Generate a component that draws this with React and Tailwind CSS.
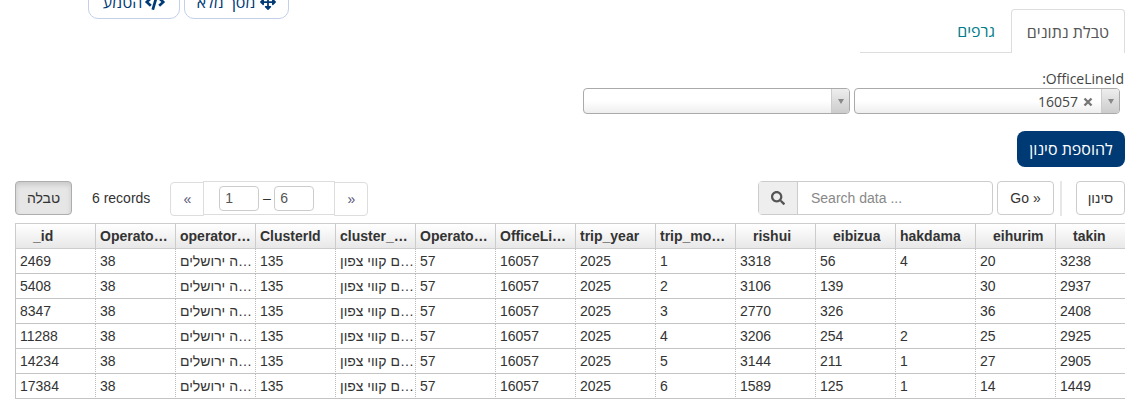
import React from 'react';
import { FaSearch, FaCode, FaArrowsAlt } from 'react-icons/fa';

const columns = [
  { label: '_id', pad: true },
  { label: 'Operato…' },
  { label: 'operator…' },
  { label: 'ClusterId' },
  { label: 'cluster_…' },
  { label: 'Operato…' },
  { label: 'OfficeLi…' },
  { label: 'trip_year' },
  { label: 'trip_mo…' },
  { label: 'rishui', pad: true },
  { label: 'eibizua', pad: true },
  { label: 'hakdama' },
  { label: 'eihurim', pad: true },
  { label: 'takin', pad: true },
];

const rows = [
  ['2469', '1', '3318', '56', '4', '20', '3238'],
  ['5408', '2', '3106', '139', '', '30', '2937'],
  ['8347', '3', '2770', '326', '', '36', '2408'],
  ['11288', '4', '3206', '254', '2', '25', '2925'],
  ['14234', '5', '3144', '211', '1', '27', '2905'],
  ['17384', '6', '1589', '125', '1', '14', '1449'],
];

function Cell({ children, first }) {
  return (
    <td
      className={`h-[25px] overflow-hidden whitespace-nowrap border-b border-l border-b-[#c4c4c4] p-0 pl-[4px] ${
        first ? 'border-l-[#c4c4c4]' : 'border-l-[#bbb] [border-left-style:dotted]'
      }`}
    >
      {children}
    </td>
  );
}

function SelectBox({ value, width }) {
  return (
    <div className={`flex h-[26px] overflow-hidden rounded-[4px] border border-[#aaa] bg-gradient-to-b from-white via-white to-[#eee] font-['Open_Sans',sans-serif] ${width}`}>
      <div className="flex flex-1 items-center justify-end pr-[8px] text-[14px] text-[#444]">
        {value && (
          <>
            <span>{value}</span>
            <svg width="10" height="10" viewBox="0 0 10 10" className="ml-[5px] mt-[2px]">
              <path d="M1.5 1.5l7 7M8.5 1.5l-7 7" stroke="#777" strokeWidth="2.4" />
            </svg>
          </>
        )}
      </div>
      <div className="flex w-[18px] items-center justify-center border-l border-[#ccc] bg-gradient-to-b from-[#eee] to-[#ccc]">
        <div className="mt-[1px] h-0 w-0 border-x-[3.5px] border-t-[5px] border-x-transparent border-t-[#888]" />
      </div>
    </div>
  );
}

export default function App() {
  return (
    <div className="h-[410px] w-[1137px] overflow-hidden bg-white font-['Liberation_Sans',sans-serif] text-[14px] text-[#333]">
      {/* Top buttons, cut off by the top of the window */}
      <div className="-mt-[16px] flex h-[35px] gap-[4px] pl-[88px]">
        <button className="flex h-[35px] w-[92px] items-center justify-center gap-[3px] rounded-[10px] border border-[#c3d0e8] font-['Open_Sans',sans-serif] text-[16px] text-[#003a75]">
          <span>הטמע</span>
          <FaCode size={20} className="text-[#003a75]" />
        </button>
        <button className="flex h-[35px] w-[105px] items-center justify-center gap-[5px] rounded-[10px] border border-[#c3d0e8] font-['Open_Sans',sans-serif] text-[16px] text-[#003a75]">
          <span>מסך מלא</span>
          <FaArrowsAlt size={16} className="text-[#003a75]" />
        </button>
      </div>

      {/* Tabs */}
      <div className="mr-[12px] mt-[-10px] flex h-[44px] justify-end pl-[860px]">
        <div className="flex h-[44px] flex-1 items-center justify-end border-b border-[#ddd] pr-[16px] font-['Open_Sans',sans-serif] text-[16px] text-[#007b8a]">
          גרפים
        </div>
        <div className="flex h-[44px] w-[114px] items-center justify-center rounded-t-[4px] border border-b-0 border-[#ddd] font-['Open_Sans',sans-serif] text-[16px] text-[#555]">
          טבלת נתונים
        </div>
      </div>

      {/* Filters */}
      <div className="mr-[13px] mt-[17px] text-right font-['Open_Sans',sans-serif] text-[14px] leading-[18px] text-[#444]" dir="rtl">
        OfficeLineId:
      </div>
      <div className="mr-[17px] flex justify-end gap-[4px]">
        <SelectBox width="w-[267px]" />
        <SelectBox width="w-[266px]" value="16057" />
      </div>
      <div className="mr-[12px] mt-[17px] flex justify-end">
        <button className="h-[36px] w-[108px] rounded-[8px] bg-[#003a75] font-['Open_Sans',sans-serif] text-[16px] text-white">
          להוספת סינון
        </button>
      </div>

      {/* Toolbar */}
      <div className="ml-[15px] mr-[12px] mt-[14px] flex h-[35px] items-start justify-between">
        <div className="flex items-start">
          <button className="h-[34px] w-[57px] rounded-[4px] border border-[#adadad] bg-[#e6e6e6] text-[#333] shadow-[inset_0_3px_5px_rgba(0,0,0,0.125)]">
            טבלה
          </button>
          <span className="ml-[20px] mt-[8px] leading-[18px]">6 records</span>
          <div className="ml-[20px] flex h-[35px]">
            <div className="mt-[1px] flex h-[34px] w-[34px] items-center justify-center rounded-l-[4px] border border-[#ddd] text-[#557]">«</div>
            <div className="-ml-px flex h-[34px] w-[132px] items-center gap-[3px] border border-[#ddd] pl-[15px]">
              <span className="flex h-[25px] w-[40px] items-center rounded-[4px] border border-[#ccc] pl-[5px] text-[#555]">1</span>
              <span className="w-[9px] text-center">–</span>
              <span className="flex h-[25px] w-[40px] items-center rounded-[4px] border border-[#ccc] pl-[5px] text-[#555]">6</span>
            </div>
            <div className="-ml-px mt-[1px] flex h-[34px] w-[34px] items-center justify-center rounded-r-[4px] border border-[#ddd] text-[#557]">»</div>
          </div>
        </div>
        <div className="flex items-start">
          <div className="flex h-[34px] w-[235px] rounded-[4px] border border-[#ccc]">
            <div className="flex w-[39px] items-center justify-center border-r border-[#ccc] bg-[#eee]">
              <FaSearch size={14} className="text-[#555]" />
            </div>
            <span className="flex flex-1 items-center pl-[13px] text-[#888]">Search data ...</span>
          </div>
          <button className="ml-[4px] h-[34px] w-[57px] rounded-[4px] border border-[#ccc]">Go »</button>
          <div className="ml-[6px] h-[35px] w-[2px] bg-[#e7e7e7]" />
          <button className="ml-[14px] h-[34px] w-[49px] rounded-[4px] border border-[#ccc]">סינון</button>
        </div>
      </div>

      {/* Data table */}
      <div className="ml-[15px] mr-[12px] mt-[7px] overflow-hidden">
        <table className="w-[1120px] table-fixed border-separate border-spacing-0">
          <thead>
            <tr>
              {columns.map((col, i) => (
                <th
                  key={i}
                  className={`h-[26px] w-[80px] overflow-hidden whitespace-nowrap border-y border-l border-[#ccc] bg-gradient-to-b from-white to-[#e8e8e8] p-0 text-left font-bold ${
                    col.pad ? 'pl-[17px]' : 'pl-[4px]'
                  }`}
                >
                  {col.label}
                </th>
              ))}
            </tr>
          </thead>
          <tbody>
            {rows.map((r) => (
              <tr key={r[0]}>
                <Cell first>{r[0]}</Cell>
                <Cell>38</Cell>
                <Cell><span dir="rtl" className="block text-left">…ה ירושלים</span></Cell>
                <Cell>135</Cell>
                <Cell><span dir="rtl" className="block text-left">…ם קווי צפון</span></Cell>
                <Cell>57</Cell>
                <Cell>16057</Cell>
                <Cell>2025</Cell>
                <Cell>{r[1]}</Cell>
                <Cell>{r[2]}</Cell>
                <Cell>{r[3]}</Cell>
                <Cell>{r[4]}</Cell>
                <Cell>{r[5]}</Cell>
                <Cell>{r[6]}</Cell>
              </tr>
            ))}
          </tbody>
        </table>
      </div>
    </div>
  );
}
